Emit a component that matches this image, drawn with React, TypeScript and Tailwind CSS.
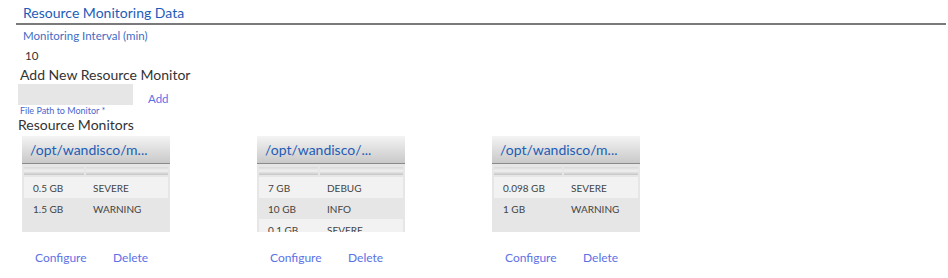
import React from 'react';

type Row = { size: string; level: string };

interface Monitor {
    path: string;
    cols: [number, number];
    rows: Row[];
}

const monitors: Monitor[] = [
    { path: '/opt/wandisco/m...', cols: [62, 82], rows: [{ size: '0.5 GB', level: 'SEVERE' }, { size: '1.5 GB', level: 'WARNING' }] },
    { path: '/opt/wandisco/...', cols: [61, 83], rows: [{ size: '7 GB', level: 'DEBUG' }, { size: '10 GB', level: 'INFO' }, { size: '0.1 GB', level: 'SEVERE' }] },
    { path: '/opt/wandisco/m...', cols: [70, 74], rows: [{ size: '0.098 GB', level: 'SEVERE' }, { size: '1 GB', level: 'WARNING' }] },
];

const MonitorCard = ({ monitor }: { monitor: Monitor }) => {
    return (
        <div className="w-[235px] shrink-0">
            {/* Card (rows past the bottom are clipped, like the original) */}
            <div className="w-[148px] h-[96px] bg-[#e6e6e6] overflow-hidden">
                <div className="h-[28px] bg-gradient-to-b from-[#f4f4f4] to-[#c9c9c9] border-b border-[#8a8a8a] flex items-center pl-[8px]">
                    <span className="text-[14px] text-[#1d5cb8] leading-none whitespace-nowrap">{monitor.path}</span>
                </div>
                <table className="table-fixed border-collapse ml-[2px]" style={{ width: monitor.cols[0] + monitor.cols[1] }}>
                    <thead>
                        <tr className="h-[13px]">
                            <th className="p-0 pr-[2px]" style={{ width: monitor.cols[0] }}>
                                <div className="h-[8px] mt-[1px] bg-gradient-to-b from-[#d8d8d8] via-[#f0f0f0] to-[#c4c4c4]" />
                            </th>
                            <th className="p-0" style={{ width: monitor.cols[1] }}>
                                <div className="h-[8px] mt-[1px] bg-gradient-to-b from-[#d8d8d8] via-[#f0f0f0] to-[#c4c4c4]" />
                            </th>
                        </tr>
                    </thead>
                    <tbody>
                        {monitor.rows.map((row, i) => (
                            <tr key={i} className={`h-[21px] ${i % 2 === 0 ? 'bg-[#f2f2f2]' : 'bg-[#e6e6e6]'}`}>
                                <td className="p-0 pl-[9px] text-[10px] text-[#444] leading-none whitespace-nowrap">{row.size}</td>
                                <td className="p-0 pl-[7px] text-[10px] text-[#444] leading-none whitespace-nowrap">{row.level}</td>
                            </tr>
                        ))}
                    </tbody>
                </table>
            </div>

            {/* Actions */}
            <div className="flex mt-[19px] pl-[13px] text-[12px] text-[#5b72e6] leading-[14px]">
                <a className="w-[78px] cursor-pointer">Configure</a>
                <a className="cursor-pointer">Delete</a>
            </div>
        </div>
    );
};

export default function App() {
    return (
        <div className="w-[948px] h-[278px] overflow-hidden bg-white font-['Lato',sans-serif]">
            {/* Section Header */}
            <div className="ml-[16px] mr-[2px] border-b-2 border-[#7a7a7a] pl-[7px] pt-[4px] h-[25px]">
                <h2 className="text-[14px] leading-[18px] text-[#1d5cb8]">Resource Monitoring Data</h2>
            </div>

            {/* Interval */}
            <div className="pl-[23px] pt-[4px] text-[11.5px] leading-[14px] text-[#3f6cc4]">Monitoring Interval (min)</div>
            <div className="pl-[25px] pt-[6px] text-[11.5px] leading-[14px] text-[#333]">10</div>

            {/* Add New */}
            <div className="pl-[20px] pt-[3px] text-[14px] leading-[18px] text-[#333]">Add New Resource Monitor</div>
            <div className="flex items-end pl-[18px]">
                <div className="w-[115px] h-[21px] bg-[#e6e6e6]" />
                <span className="ml-[15px] text-[11.5px] leading-[14px] text-[#5b6fe6] mb-[-1px]">Add</span>
            </div>
            <div className="pl-[20px] pt-[1px] text-[9px] leading-[10px] text-[#4a66cf]">File Path to Monitor *</div>
            <div className="pl-[18px] text-[14px] leading-[18px] text-[#333]">Resource Monitors</div>

            {/* Monitor cards */}
            <div className="flex pl-[22px] pt-[2px]">
                {monitors.map((m, i) => (
                    <MonitorCard key={i} monitor={m} />
                ))}
            </div>
        </div>
    );
}
